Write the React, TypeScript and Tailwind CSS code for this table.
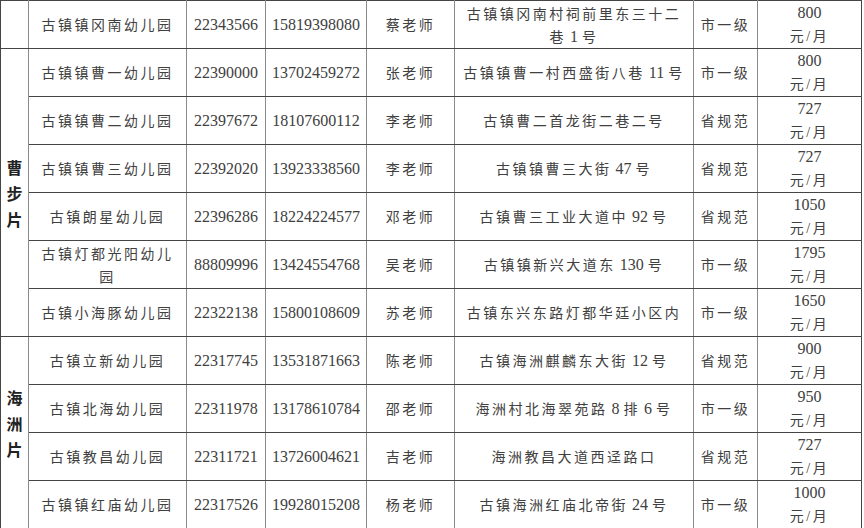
type Row = {
  name: string;
  tel: string;
  mobile: string;
  teacher: string;
  addr: string;
  level: string;
  fee: string;
};

const rows: Row[] = [
  { name: "古镇镇冈南幼儿园", tel: "22343566", mobile: "15819398080", teacher: "蔡老师", addr: "古镇镇冈南村祠前里东三十二巷1号", level: "市一级", fee: "800" },
  { name: "古镇镇曹一幼儿园", tel: "22390000", mobile: "13702459272", teacher: "张老师", addr: "古镇镇曹一村西盛街八巷11号", level: "市一级", fee: "800" },
  { name: "古镇镇曹二幼儿园", tel: "22397672", mobile: "18107600112", teacher: "李老师", addr: "古镇曹二首龙街二巷二号", level: "省规范", fee: "727" },
  { name: "古镇镇曹三幼儿园", tel: "22392020", mobile: "13923338560", teacher: "李老师", addr: "古镇镇曹三大街47号", level: "省规范", fee: "727" },
  { name: "古镇朗星幼儿园", tel: "22396286", mobile: "18224224577", teacher: "邓老师", addr: "古镇曹三工业大道中92号", level: "省规范", fee: "1050" },
  { name: "古镇灯都光阳幼儿园", tel: "88809996", mobile: "13424554768", teacher: "吴老师", addr: "古镇镇新兴大道东130号", level: "市一级", fee: "1795" },
  { name: "古镇小海豚幼儿园", tel: "22322138", mobile: "15800108609", teacher: "苏老师", addr: "古镇东兴东路灯都华廷小区内", level: "市一级", fee: "1650" },
  { name: "古镇立新幼儿园", tel: "22317745", mobile: "13531871663", teacher: "陈老师", addr: "古镇海洲麒麟东大街12号", level: "省规范", fee: "900" },
  { name: "古镇北海幼儿园", tel: "22311978", mobile: "13178610784", teacher: "邵老师", addr: "海洲村北海翠苑路8排6号", level: "市一级", fee: "950" },
  { name: "古镇教昌幼儿园", tel: "22311721", mobile: "13726004621", teacher: "吉老师", addr: "海洲教昌大道西迳路口", level: "省规范", fee: "727" },
  { name: "古镇镇红庙幼儿园", tel: "22317526", mobile: "19928015208", teacher: "杨老师", addr: "古镇海洲红庙北帝街24号", level: "市一级", fee: "1000" },
];

// region label cells: [start row, span, label]
const regions: Record<number, { span: number; label: string[]; shift?: string }> = {
  0: { span: 1, label: [] },
  1: { span: 6, label: ["曹", "步", "片"] },
  7: { span: 4, label: ["海", "洲", "片"], shift: "pb-5" },
};

const cell =
  "border border-y-[#454545] border-x-[#8a8a8a] text-center align-middle p-0 leading-[23px]";
const cjk = "font-['Noto_Sans_CJK_SC',sans-serif] text-[14px] tracking-[2.5px]";
const num = "font-['Liberation_Serif',serif] text-[16px] tracking-normal";

// Chinese text with numbers set in serif, like the Word document
function Mixed({ text }: { text: string }) {
  const parts = text.split(/(\d+)/).filter(Boolean);
  return (
    <>
      {parts.map((p, i) =>
        /^\d+$/.test(p) ? (
          <span key={i} className={num}>
            {" "}
            {p}{" "}
          </span>
        ) : (
          <span key={i}>{p}</span>
        )
      )}
    </>
  );
}

export default function App() {
  return (
    <div className="w-[864px] h-[528px] bg-white overflow-hidden text-[#404040]">
      <table className="table-fixed border-collapse w-[862px] border border-[#454545]">
        <colgroup>
          <col className="w-[28px]" />
          <col className="w-[158px]" />
          <col className="w-[79px]" />
          <col className="w-[101px]" />
          <col className="w-[88px]" />
          <col className="w-[239px]" />
          <col className="w-[64px]" />
          <col className="w-[104px]" />
        </colgroup>
        <tbody>
          {rows.map((r, i) => (
            <tr key={r.tel} className="h-[48px]">
              {regions[i] && (
                <td
                  rowSpan={regions[i].span}
                  className={`${cell} border-l-[#454545] font-['Noto_Sans_CJK_SC',sans-serif] text-[16px] font-bold !leading-[26px] text-[#222] ${regions[i].shift ?? ""}`}
                >
                  {regions[i].label.map((c) => (
                    <div key={c}>{c}</div>
                  ))}
                </td>
              )}
              <td className={`${cell} ${cjk} px-[10px]`}>{r.name}</td>
              <td className={`${cell} ${num} whitespace-nowrap`}>{r.tel}</td>
              <td className={`${cell} ${num} whitespace-nowrap`}>{r.mobile}</td>
              <td className={`${cell} ${cjk}`}>{r.teacher}</td>
              <td className={`${cell} ${cjk} px-[6px]`}>
                <Mixed text={r.addr} />
              </td>
              <td className={`${cell} ${cjk}`}>{r.level}</td>
              <td className={`${cell} border-r-[#454545]`}>
                <div className={num}>{r.fee}</div>
                <div className={cjk}>
                  元<span className="font-['Liberation_Serif',serif]">/</span>月
                </div>
              </td>
            </tr>
          ))}
        </tbody>
      </table>
    </div>
  );
}
